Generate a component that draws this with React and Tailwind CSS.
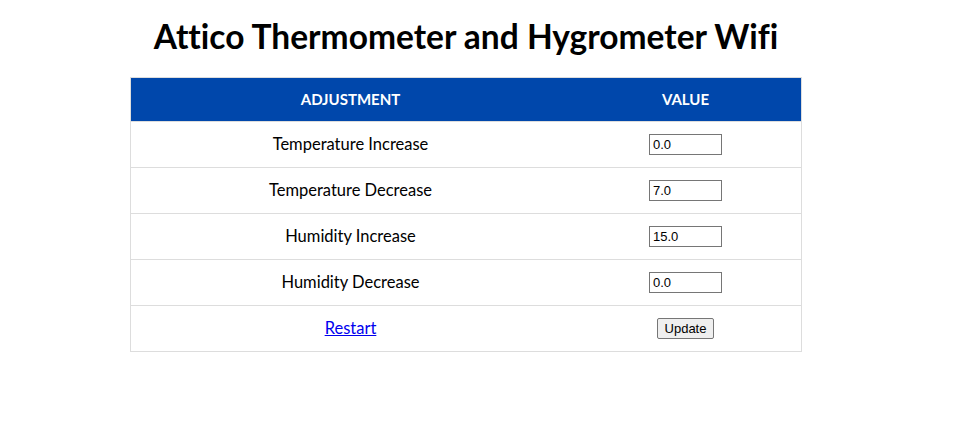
const rows = [
  { label: 'Temperature Increase', value: '0.0' },
  { label: 'Temperature Decrease', value: '7.0' },
  { label: 'Humidity Increase', value: '15.0' },
  { label: 'Humidity Decrease', value: '0.0' },
];

export default function App() {
  return (
    <div className="w-[932px] bg-white text-black font-['Lato',sans-serif] [font-variant-ligatures:none]">
      <h1 className="pt-[17px] pb-[22px] text-center text-[33.5px] leading-[38px] font-bold">
        Attico Thermometer and Hygrometer Wifi
      </h1>

      <div className="mx-auto w-[672px] border border-[#dddddd]">
        <div className="grid grid-cols-[439px_231px] h-[43px] items-center bg-[#0047ab] text-white text-[15px] font-bold">
          <div className="text-center">ADJUSTMENT</div>
          <div className="text-center">VALUE</div>
        </div>

        {rows.map((r) => (
          <div
            key={r.label}
            className="grid grid-cols-[439px_231px] h-[46px] items-center border-t border-[#dddddd] text-[16.5px]"
          >
            <div className="text-center">{r.label}</div>
            <div className="flex justify-center">
              <input
                defaultValue={r.value}
                className="w-[73px] h-[21px] border border-[#767676] px-[3px] text-[13px] font-['Liberation_Sans',sans-serif]"
              />
            </div>
          </div>
        ))}

        <div className="grid grid-cols-[439px_231px] h-[46px] items-center border-t border-[#dddddd] text-[16.5px]">
          <div className="text-center">
            <a href="#" className="text-[#0000ee] underline">
              Restart
            </a>
          </div>
          <div className="flex justify-center">
            <button className="h-[21px] px-[7px] border border-[#767676] rounded-[2px] bg-[#efefef] text-[13px] leading-none font-['Liberation_Sans',sans-serif]">
              Update
            </button>
          </div>
        </div>
      </div>
    </div>
  );
}
